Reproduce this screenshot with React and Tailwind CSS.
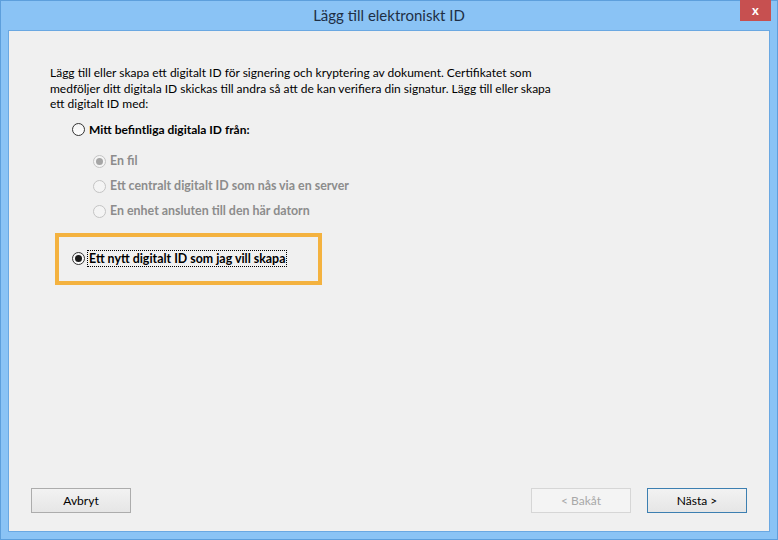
import React from 'react';

const font = { fontFamily: 'Lato, "Noto Sans", Arial, sans-serif' };

function Radio({ checked, disabled }) {
  return (
    <span
      className={`flex h-[13px] w-[13px] shrink-0 items-center justify-center rounded-full border ${
        disabled
          ? 'border-[#c4c4c4] bg-[#f4f4f4]'
          : 'border-[#333] bg-gradient-to-b from-[#f3f3f3] to-white'
      }`}
    >
      {checked && (
        <span
          className={`h-[7px] w-[7px] rounded-full ${disabled ? 'bg-[#a5a5a5]' : 'bg-[#1a1a1a]'}`}
        />
      )}
    </span>
  );
}

function Button({ children, disabled, primary }) {
  return (
    <button
      className={`h-[25px] w-[100px] border text-[12px] ${
        disabled
          ? 'border-[#d6d6d6] bg-[#f4f4f4] text-[#a8a8a8]'
          : primary
          ? 'border-[#3c7fb1] bg-gradient-to-b from-[#f2f2f2] to-[#e6e6e6] text-black'
          : 'border-[#acacac] bg-gradient-to-b from-[#f2f2f2] to-[#e6e6e6] text-black'
      }`}
    >
      {children}
    </button>
  );
}

export default function App() {
  const subOptions = [
    { label: 'En fil', checked: true },
    { label: 'Ett centralt digitalt ID som nås via en server' },
    { label: 'En enhet ansluten till den här datorn' },
  ];

  return (
    <div
      style={font}
      className="flex h-[540px] w-[778px] flex-col border border-[#5d9fdc] bg-[#8ac3f5]"
    >
      <div className="relative flex h-[29px] shrink-0 items-center justify-center">
        <span className="text-[15px] text-[#1e2f45]">Lägg till elektroniskt ID</span>
        <div className="absolute right-[6px] top-[-1px] flex h-[21px] w-[31px] items-center justify-center bg-[#c75050] text-[13px] font-bold text-white">
          x
        </div>
      </div>

      <div className="mx-[7px] mb-[7px] flex flex-1 flex-col border border-[#6aa8e2] bg-[#f0f0f0] text-black">
        <div className="flex flex-1 flex-col pl-[41px] pt-[34px]">
          <p className="text-[12px] leading-[15.5px]">
            Lägg till eller skapa ett digitalt ID för signering och kryptering av dokument. Certifikatet som
            <br />
            medföljer ditt digitala ID skickas till andra så att de kan verifiera din signatur. Lägg till eller skapa
            <br />
            ett digitalt ID med:
          </p>

          <div className="ml-[22px] mt-[10px] flex h-[16px] items-center gap-[4px] text-[12px] font-bold">
            <Radio />
            <span>Mitt befintliga digitala ID från:</span>
          </div>

          <div className="ml-[43px] mt-[16px] flex flex-col gap-[9px]">
            {subOptions.map((o) => (
              <div
                key={o.label}
                className="flex h-[16px] items-center gap-[4px] text-[12.4px] font-bold text-[#8c8c8c]"
              >
                <Radio disabled checked={o.checked} />
                <span>{o.label}</span>
              </div>
            ))}
          </div>

          <div className="ml-[5px] mt-[13px] flex h-[52px] w-[267px] items-center border-4 border-[#f4b23f] pl-[13px]">
            <div className="flex items-center gap-[2px] text-[12.4px] font-bold">
              <Radio checked />
              <span className="border border-dotted border-black px-px leading-[15px]">
                Ett nytt digitalt ID som jag vill skapa
              </span>
            </div>
          </div>
        </div>

        <div className="flex items-center justify-between px-[22px] pb-[18px]">
          <Button>Avbryt</Button>
          <div className="flex gap-[16px]">
            <Button disabled>&lt; Bakåt</Button>
            <Button primary>Nästa &gt;</Button>
          </div>
        </div>
      </div>
    </div>
  );
}
